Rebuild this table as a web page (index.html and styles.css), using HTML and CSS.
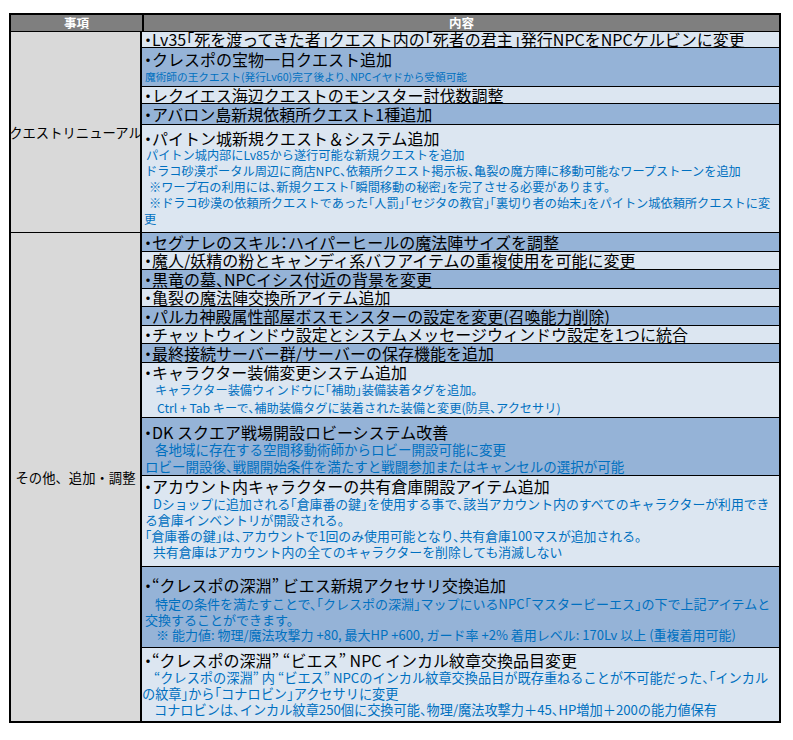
FILE: index.html
```html
<!DOCTYPE html>
<html lang="ja">
<head>
<meta charset="utf-8">
<title>更新内容</title>
<link rel="stylesheet" href="styles.css">
</head>
<body>
<div class="sheet">
  <div class="head">
    <div class="hc hl">事項</div>
    <div class="hc hr">内容</div>
  </div>

  <div class="group g1">
    <div class="label">クエストリニューアル</div>
    <div class="rows">
      <div class="row light h16"><div class="t">・Lv35「死を渡ってきた者」クエスト内の「死者の君主」発行NPCをNPCケルビンに変更</div></div>
      <div class="row mid r-takara">
        <div class="t">・クレスポの宝物一日クエスト追加</div>
        <div class="s i3">魔術師の王クエスト(発行Lv60)完了後より、NPCイヤドから受領可能</div>
      </div>
      <div class="row light h17"><div class="t">・レクイエス海辺クエストのモンスター討伐数調整</div></div>
      <div class="row mid h21"><div class="t">・アバロン島新規依頼所クエスト1種追加</div></div>
      <div class="row light r-paiton">
        <div class="t">・パイトン城新規クエスト＆システム追加</div>
        <div class="s i4">パイトン城内部にLv85から遂行可能な新規クエストを追加</div>
        <div class="s i3">ドラコ砂漠ポータル周辺に商店NPC、依頼所クエスト掲示板、亀裂の魔方陣に移動可能なワープストーンを追加</div>
        <div class="s i7">※ワープ石の利用には、新規クエスト「瞬間移動の秘密」を完了させる必要があります。</div>
        <div class="s i7">※ドラコ砂漠の依頼所クエストであった「人罰」「セジタの教官」「裏切り者の始末」をパイトン城依頼所クエストに変</div>
        <div class="s i2">更</div>
      </div>
    </div>
  </div>

  <div class="group g2">
    <div class="label">その他、追加・調整</div>
    <div class="rows">
      <div class="row mid h19"><div class="t">・セグナレのスキル：ハイパーヒールの魔法陣サイズを調整</div></div>
      <div class="row light h18"><div class="t">・魔人/妖精の粉とキャンディ系バフアイテムの重複使用を可能に変更</div></div>
      <div class="row mid h19"><div class="t">・黒竜の墓、NPCイシス付近の背景を変更</div></div>
      <div class="row light h18"><div class="t">・亀裂の魔法陣交換所アイテム追加</div></div>
      <div class="row mid h19"><div class="t">・パルカ神殿属性部屋ボスモンスターの設定を変更(召喚能力削除)</div></div>
      <div class="row light h18"><div class="t">・チャットウィンドウ設定とシステムメッセージウィンドウ設定を1つに統合</div></div>
      <div class="row mid h19"><div class="t">・最終接続サーバー群/サーバーの保存機能を追加</div></div>
      <div class="row light r-equip">
        <div class="t">・キャラクター装備変更システム追加</div>
        <div class="s i13">キャラクター装備ウィンドウに「補助」装備装着タグを追加。</div>
        <div class="s i15">Ctrl + Tab キーで、補助装備タグに装着された装備と変更(防具、アクセサリ)</div>
      </div>
      <div class="row mid r-dk">
        <div class="t">・DK スクエア戦場開設ロビーシステム改善</div>
        <div class="s i13">各地域に存在する空間移動術師からロビー開設可能に変更</div>
        <div class="s i3">ロビー開設後、戦闘開始条件を満たすと戦闘参加またはキャンセルの選択が可能</div>
      </div>
      <div class="row light r-acct">
        <div class="t">・アカウント内キャラクターの共有倉庫開設アイテム追加</div>
        <div class="s i11">Dショップに追加される「倉庫番の鍵」を使用する事で、該当アカウント内のすべてのキャラクターが利用でき</div>
        <div class="s i3">る倉庫インベントリが開設される。</div>
        <div class="s i3">「倉庫番の鍵」は、アカウントで1回のみ使用可能となり、共有倉庫100マスが追加される。</div>
        <div class="s i11">共有倉庫はアカウント内の全てのキャラクターを削除しても消滅しない</div>
      </div>
      <div class="row mid r-abyss">
        <div class="t">・“クレスポの深淵” ビエス新規アクセサリ交換追加</div>
        <div class="s i13">特定の条件を満たすことで、「クレスポの深淵」マップにいるNPC「マスタービーエス」の下で上記アイテムと</div>
        <div class="s i3">交換することができます。</div>
        <div class="s i14">※ 能力値: 物理/魔法攻撃力 +80, 最大HP +600, ガード率 +2% 着用レベル: 170Lv 以上 (重複着用可能)</div>
      </div>
      <div class="row light r-incal">
        <div class="t">・“クレスポの深淵” “ビエス” NPC インカル紋章交換品目変更</div>
        <div class="s i12">“クレスポの深淵” 内 “ビエス” NPCのインカル紋章交換品目が既存重ねることが不可能だった、「インカル</div>
        <div class="s i0">の紋章」から「コナロビン」アクセサリに変更</div>
        <div class="s i12">コナロビンは、インカル紋章250個に交換可能、物理/魔法攻撃力＋45、HP増加＋200の能力値保有</div>
      </div>
    </div>
  </div>
</div>
</body>
</html>
```
FILE: styles.css
```css
body {
  margin: 13px 0 0 9px;
  background: #ffffff;
  font-family: "Noto Sans CJK JP", "Noto Sans", sans-serif;
  color: #000;
}

.sheet {
  width: 772px;
  border: 2px solid #000;
  box-sizing: border-box;
}

.head {
  display: flex;
  height: 17px;
  background: #7f7f7f;
  border-bottom: 1px solid #000;
  box-sizing: border-box;
}

.hc {
  color: #fff;
  font-weight: bold;
  font-size: 12.5px;
  line-height: 16px;
  text-align: center;
}

.hl {
  width: 131px;
  border-right: 2px solid #000;
}

.hr {
  flex: 1;
}

.group {
  display: flex;
}

.label {
  width: 131px;
  flex: none;
  border-right: 2px solid #000;
  background: #d9d9d9;
  display: flex;
  align-items: center;
  justify-content: center;
  white-space: nowrap;
  font-size: 13.33px;
  box-sizing: border-box;
}

.g1 .label {
  border-bottom: 1px solid #000;
}

.rows {
  flex: 1;
  min-width: 0;
  display: flex;
  flex-direction: column;
}

.row {
  box-sizing: border-box;
  border-bottom: 1px solid #000;
  overflow: hidden;
  padding-left: 2px;
}

.g2 .row:last-child {
  border-bottom: none;
}

.light { background: #dce6f1; }
.mid { background: #95b3d7; }

.t {
  font-size: 16px;
  white-space: nowrap;
  font-feature-settings: "halt";
}

.s {
  color: #0070c0;
  white-space: nowrap;
  font-size: 13.33px;
  line-height: 16px;
  font-feature-settings: "halt";
}

.i0 { margin-left: -2px; }
.i2 { margin-left: 0; }
.i3 { margin-left: 1px; }
.i4 { margin-left: 2px; }
.i7 { margin-left: 5px; }
.i11 { margin-left: 9px; }
.i12 { margin-left: 10px; }
.i13 { margin-left: 11px; }
.i14 { margin-left: 12px; }
.i15 { margin-left: 13px; }

.h16 { height: 16px; line-height: 15px; }
.h17 { height: 17px; line-height: 16px; }
.h18 { height: 18px; line-height: 17px; }
.h19 { height: 19px; line-height: 18px; }
.h21 { height: 21px; line-height: 20px; }

.r-takara { height: 39px; padding-top: 2px; }
.r-takara .t { line-height: 18px; }
.r-takara .s { font-size: 10.67px; line-height: 18px; }

.r-paiton { height: 108px; padding-top: 4px; }
.r-paiton .t { line-height: 18px; }
.r-paiton .s { font-size: 12.2px; line-height: 16px; }

.r-equip { height: 55px; }
.r-equip .t { line-height: 18px; }
.r-equip .s { font-size: 12.2px; line-height: 18px; }

.r-dk { height: 58px; padding-top: 5px; }
.r-dk .t { line-height: 18px; }
.r-dk .s { font-size: 13.5px; line-height: 17px; }

.r-acct { height: 91px; padding-top: 1px; }
.r-acct .t { line-height: 19px; }
.r-acct .s { font-size: 12.85px; line-height: 16px; }

.r-abyss { height: 81px; padding-top: 7px; }
.r-abyss .t { line-height: 22px; }
.r-abyss .s { font-size: 13px; line-height: 15.5px; }

.r-incal { height: 73px; padding-top: 2px; }
.r-incal .t { line-height: 20px; }
.r-incal .s { font-size: 13.2px; line-height: 16px; }
```
